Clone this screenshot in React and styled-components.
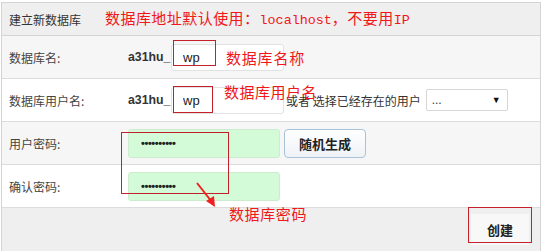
import styled, { createGlobalStyle } from "styled-components";

const GlobalStyle = createGlobalStyle`
  body {
    margin: 0;
    background: #fff;
    font-family: "Noto Sans CJK SC", "Liberation Sans", sans-serif;
    color: #333;
  }
`;

const Wrap = styled.div`
  position: relative;
  width: 545px;
  height: 251px;
  padding: 2px 0 0 1px;
  box-sizing: border-box;
`;

const Panel = styled.div`
  width: 540px;
  border: 1px solid #d4d4d4;
  box-sizing: border-box;
`;

const Header = styled.div`
  height: 32px;
  display: flex;
  align-items: center;
  gap: 24px;
  padding-left: 7px;
  background: #efefef;
  border-bottom: 1px solid #d4d4d4;
  font-size: 12px;
`;

const Note = styled.span`
  color: #f01818;
  font-family: "Noto Sans CJK SC", sans-serif;
  font-size: 15px;
  letter-spacing: ${(p) => p.$spacing || "0.3px"};
  line-height: 1;
  white-space: nowrap;
`;

const Latin = styled.span`
  font-family: "Liberation Mono", monospace;
  font-size: 13.4px;
  letter-spacing: 0;
`;

const Row = styled.div`
  height: 42px;
  display: flex;
  align-items: center;
  background: ${(p) => (p.$shade ? "#f6f6f6" : "#fff")};
  border-bottom: 1px solid #dcdcdc;
  font-size: 12px;
`;

const Label = styled.div`
  width: 126px;
  flex-shrink: 0;
  padding-left: 7px;
  box-sizing: border-box;
  color: #444;
`;

const Prefix = styled.span`
  font-family: "Liberation Sans", sans-serif;
  font-weight: bold;
  font-size: 12.3px;
  color: #333;
  width: 43px;
  flex-shrink: 0;
`;

const TextInput = styled.input`
  width: 113px;
  height: 27px;
  box-sizing: border-box;
  border: 1px solid #e2e2e2;
  border-radius: 3px;
  background: #fff;
  padding: 0 0 0 11px;
  font-family: "Liberation Sans", sans-serif;
  font-size: 13px;
  color: #222;
  outline: none;
`;

const PassInput = styled.input`
  width: 152px;
  height: 29px;
  box-sizing: border-box;
  border: 1px solid #cdeccf;
  border-radius: 3px;
  background: #d4fbd8;
  padding: 0 0 0 12px;
  font-family: "Liberation Sans", sans-serif;
  font-size: 11px;
  font-weight: bold;
  letter-spacing: -0.4px;
  color: #222;
  outline: none;
`;

const Hint = styled.span`
  margin-left: 2px;
  color: #333;
  white-space: nowrap;
`;

const Select = styled.div`
  margin-left: 5px;
  width: 82px;
  height: 22px;
  box-sizing: border-box;
  border: 1px solid #d6d6d6;
  border-radius: 2px;
  display: flex;
  align-items: center;
  justify-content: space-between;
  padding: 0 6px 0 5px;
  font-family: "Liberation Sans", sans-serif;
  font-size: 12px;
  background: #fff;
  & > b {
    font-size: 9px;
    color: #111;
  }
`;

const Button = styled.div`
  height: 29px;
  box-sizing: border-box;
  padding: 0 14px;
  display: flex;
  align-items: center;
  border: 1px solid #a8c2da;
  border-radius: 4px;
  background: linear-gradient(#ffffff, #eef2f6);
  font-weight: bold;
  font-size: 13px;
  color: #222;
  margin-left: 4px;
`;

const Footer = styled.div`
  height: 43px;
  background: #efefef;
  display: flex;
  justify-content: flex-end;
  align-items: center;
  padding-right: 11px;
`;

const Submit = styled.div`
  width: 58px;
  height: 31px;
  display: flex;
  align-items: center;
  justify-content: center;
  background: #f8f8f8;
  font-weight: bold;
  font-size: 13px;
  color: #222;
`;

const Box = styled.div`
  position: absolute;
  border: 1px solid #c2212c;
  box-sizing: border-box;
`;

const Overlay = styled.div`
  position: absolute;
  left: ${(p) => p.$x}px;
  top: ${(p) => p.$y}px;
`;

export default function App() {
  return (
    <>
      <GlobalStyle />
      <Wrap>
        <Panel>
          <Header>
            <span>建立新数据库</span>
            <Note $spacing="0.45px">
              数据库地址默认使用：<Latin>localhost</Latin>，不要用<Latin>IP</Latin>
            </Note>
          </Header>
          <Row $shade>
            <Label>数据库名:</Label>
            <Prefix>a31hu_</Prefix>
            <TextInput readOnly value="wp" />
          </Row>
          <Row>
            <Label>数据库用户名:</Label>
            <Prefix>a31hu_</Prefix>
            <TextInput readOnly value="wp" />
            <Hint>或者 选择已经存在的用户</Hint>
            <Select>
              <span>...</span>
              <b>▼</b>
            </Select>
          </Row>
          <Row $shade>
            <Label>用户密码:</Label>
            <PassInput type="password" readOnly value="abcdefghij" />
            <Button>随机生成</Button>
          </Row>
          <Row>
            <Label>确认密码:</Label>
            <PassInput type="password" readOnly value="abcdefghij" />
          </Row>
          <Footer>
            <Submit>创建</Submit>
          </Footer>
        </Panel>

        <Box style={{ left: 173, top: 40, width: 43, height: 26 }} />
        <Box style={{ left: 173, top: 86, width: 40, height: 27 }} />
        <Box style={{ left: 121, top: 132, width: 108, height: 62 }} />
        <Box style={{ left: 468, top: 207, width: 64, height: 36 }} />

        <Overlay $x={226} $y={45}>
          <Note $spacing="0.8px">数据库名称</Note>
        </Overlay>
        <Overlay $x={224} $y={79}>
          <Note $spacing="0.5px">数据库用户名</Note>
        </Overlay>
        <Overlay $x={229} $y={201}>
          <Note $spacing="0.6px">数据库密码</Note>
        </Overlay>
        <Overlay $x={194} $y={180}>
          <svg width="26" height="30" viewBox="0 0 26 30">
            <line x1="3" y1="3" x2="18" y2="22" stroke="#f02020" strokeWidth="2" />
            <polygon points="21,27 12,21 20,16" fill="#f02020" />
          </svg>
        </Overlay>
      </Wrap>
    </>
  );
}
